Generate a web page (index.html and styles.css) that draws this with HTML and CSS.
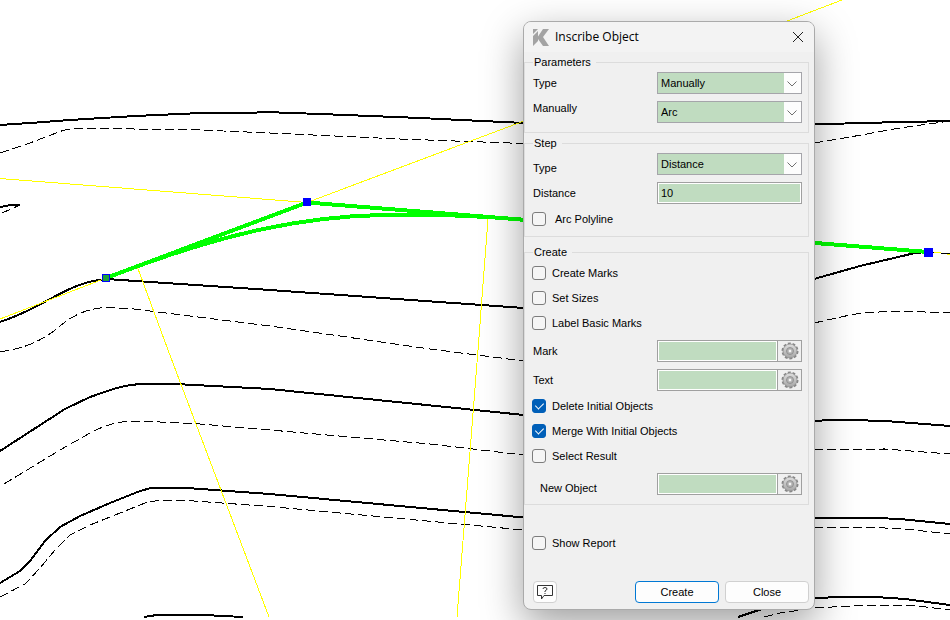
FILE: index.html
```html
<!DOCTYPE html>
<html lang="en">
<head>
<meta charset="utf-8">
<title>Inscribe Object</title>
<link rel="stylesheet" href="styles.css">
</head>
<body>
<main class="workspace">
  <svg class="drawing" viewBox="0 0 950 620" preserveAspectRatio="xMinYMin slice" aria-hidden="true">
    <g class="contour">
      <path d="M0 125L30 123L70 120L135 116L190 113.500L250 113L265 112L320 114L420 118L524 123L700 128L814 124.500L860 123L950 121"/>
      <path d="M0 207L8 205.500L20 205"/>
      <path d="M0 322C18 316 34 308 50 299C70 288 85 281 106 279L270 290L524 308"/>
      <path d="M814 279L860 266L915 253L928 252"/>
      <path d="M0 451L65 409L90 397L115 388.500Q130 384 145 384L175 384L270 389L524 415"/>
      <path d="M814 421L822 420.500L850 420L885 421L950 426"/>
      <path d="M0 583L20 571L30 561L45 541L60 527L80 516L110 503L140 491L153 487.500L180 487.500L270 494L524 517.500"/>
      <path d="M814 518.500L835 517.500L865 517.500L900 519L950 524"/>
      <path d="M144 617L160 614.500L195 614.500L243 617"/>
      <path d="M738 617L762 609L800 600L814 598.500L835 597L875 597L905 599L950 605"/>
    </g>
    <g class="contour-dashed">
      <path d="M0 153L30 143L60 131.500Q70 128 85 128L100 128.500L200 130L270 133L400 139L524 143.500"/>
      <path d="M814 143L850 137L900 128L950 121"/>
      <path d="M2 213L20 205"/>
      <path d="M0 352L10 350Q38 345 60 326Q80 309 105 307.500L130 308.500L270 326L430 349L524 361"/>
      <path d="M814 323L850 315Q870 311.500 900 311.500L950 312.500"/>
      <path d="M4 484L60 450L90 433Q112 421 135 421L160 422L200 424L270 430L430 444L524 455"/>
      <path d="M814 449.500L885 449L950 454"/>
      <path d="M0 597L25 584L40 568L55 550L70 535L90 525L120 513L145 503L160 500L180 500L270 506.500L524 530"/>
      <path d="M814 527.500L875 527.500L905 529L950 534"/>
      <path d="M764 617L780 613L814 608L850 606L870 605L910 605L950 610"/>
      <path d="M928 252L950 254"/>
    </g>
    <g class="guide">
      <path d="M0 178.500L307 202.500L524 121L787 21L842 0"/>
      <path d="M0 319L106 278"/>
      <path d="M137 266L168 350L269 617"/>
      <path d="M488 219L478 350L457 617"/>
      <path d="M934 252L941 253M947 254L950 255"/>
    </g>
    <g class="selection">
      <path d="M106 278L307 202.500L928 252"/>
      <path d="M138 266C226 234 300 217 380 215C420 214 455 215 488 217"/>
    </g>
    <g class="nodes">
      <rect class="node-start" x="102.500" y="274.500" width="7" height="7"/>
      <rect x="303" y="198" width="8" height="8"/>
      <rect x="924" y="248" width="9" height="9"/>
    </g>
  </svg>

  <form class="dialog" role="dialog" aria-labelledby="dialog-title">
    <header class="titlebar">
      <svg class="logo" viewBox="0 0 17 17" aria-hidden="true">
        <path d="M1 0h5L1 5zM1 7l5-5v5.500L11 0h6l-6 8 6 9h-6L6 10v2l-5 5z"/>
      </svg>
      <h1 id="dialog-title">Inscribe Object</h1>
      <button class="close" type="button" aria-label="Close window">
        <svg viewBox="0 0 12 12" aria-hidden="true"><path d="M1 1l10 10M11 1L1 11"/></svg>
      </button>
    </header>

    <fieldset class="group">
      <legend>Parameters</legend>
      <div class="fields">
        <div class="field">
          <label for="param-type">Type</label>
          <span class="combo">
            <select id="param-type"><option>Manually</option></select>
            <svg viewBox="0 0 10 6" aria-hidden="true"><path d="M.5 .5L5 5L9.500 .5"/></svg>
          </span>
        </div>
        <div class="field">
          <label class="high" for="param-mode">Manually</label>
          <span class="combo">
            <select id="param-mode"><option>Arc</option></select>
            <svg viewBox="0 0 10 6" aria-hidden="true"><path d="M.5 .5L5 5L9.500 .5"/></svg>
          </span>
        </div>
      </div>
    </fieldset>

    <fieldset class="group">
      <legend>Step</legend>
      <div class="fields">
        <div class="field">
          <label class="low" for="step-type">Type</label>
          <span class="combo">
            <select id="step-type"><option>Distance</option></select>
            <svg viewBox="0 0 10 6" aria-hidden="true"><path d="M.5 .5L5 5L9.500 .5"/></svg>
          </span>
        </div>
        <div class="field">
          <label for="step-distance">Distance</label>
          <input class="entry" id="step-distance" type="text" value="10">
        </div>
        <label class="check wide"><input type="checkbox">Arc Polyline</label>
      </div>
    </fieldset>

    <fieldset class="group group-create">
      <legend>Create</legend>
      <div class="checks">
        <label class="check"><input type="checkbox">Create Marks</label>
        <label class="check"><input type="checkbox">Set Sizes</label>
        <label class="check"><input type="checkbox">Label Basic Marks</label>
      </div>
      <div class="fields">
        <div class="field">
          <label for="mark">Mark</label>
          <span class="picker">
            <input class="entry" id="mark" type="text">
            <button type="button" aria-label="Mark settings"><svg class="gear" viewBox="0 0 18 18" aria-hidden="true"><use href="#gear"/></svg></button>
          </span>
        </div>
        <div class="field">
          <label for="text">Text</label>
          <span class="picker">
            <input class="entry" id="text" type="text">
            <button type="button" aria-label="Text settings"><svg class="gear" viewBox="0 0 18 18" aria-hidden="true"><use href="#gear"/></svg></button>
          </span>
        </div>
      </div>
      <div class="checks">
        <label class="check"><input type="checkbox" checked>Delete Initial Objects</label>
        <label class="check"><input type="checkbox" checked>Merge With Initial Objects</label>
        <label class="check"><input type="checkbox">Select Result</label>
      </div>
      <div class="field">
        <label class="low indent" for="new-object">New Object</label>
        <span class="picker">
          <input class="entry" id="new-object" type="text">
          <button type="button" aria-label="New object settings"><svg class="gear" viewBox="0 0 18 18" aria-hidden="true"><use href="#gear"/></svg></button>
        </span>
      </div>
    </fieldset>

    <label class="check report"><input type="checkbox">Show Report</label>

    <footer class="actions">
      <button class="help" type="button" aria-label="Help">
        <svg viewBox="0 0 18 16" aria-hidden="true">
          <path d="M1.500 1.500h15v10H8L5.500 15V11.500h-4z"/>
          <path d="M7 5Q7 3.500 9 3.500T11 5Q11 6 9 7V8M9 9v1"/>
        </svg>
      </button>
      <button class="push primary" type="submit">Create</button>
      <button class="push" type="button">Close</button>
    </footer>
  </form>

  <svg class="symbols" aria-hidden="true">
    <defs>
      <linearGradient id="metal" x1="0" y1="0" x2="0" y2="1">
        <stop offset="0" stop-color="#dedede"/>
        <stop offset="1" stop-color="#a6a6a6"/>
      </linearGradient>
      <symbol id="gear" viewBox="0 0 18 18">
        <circle cx="9" cy="9" r="7.300" fill="none" stroke="#858585" stroke-width="2.400" stroke-dasharray="2.800 1.787"/>
        <circle cx="9" cy="9" r="7" fill="url(#metal)" stroke="#909090" stroke-width=".8"/>
        <circle cx="9" cy="9" r="3.500" fill="#b4b4b4" stroke="#888" stroke-width=".8"/>
        <circle cx="9" cy="9" r="1.900" fill="#f3f3f3" stroke="#999" stroke-width=".6"/>
      </symbol>
    </defs>
  </svg>
</main>
</body>
</html>
```
FILE: styles.css
```css
* {
  box-sizing: border-box;
}

body {
  margin: 0;
  background: #fff;
  color: #000;
  font: 11px/14px "Liberation Sans", Arial, sans-serif;
}

button,
input,
select {
  margin: 0;
  color: inherit;
  font: inherit;
}

.workspace {
  position: relative;
  min-height: 100vh;
  overflow: hidden;
}

.symbols {
  position: absolute;
  width: 0;
  height: 0;
}

/* Drawing canvas */

.drawing {
  position: absolute;
  inset: 0;
  width: 100%;
  height: 100%;
  fill: none;
  shape-rendering: crispEdges;
}

.contour {
  stroke: #000;
  stroke-width: 2;
}

.contour-dashed {
  stroke: #000;
  stroke-width: 1;
  stroke-dasharray: 9 4;
}

.guide {
  stroke: #ff0;
  stroke-width: 1;
}

.selection {
  stroke: #0f0;
  stroke-width: 4;
}

.nodes {
  fill: #00f;
}

.node-start {
  fill: #1ea03c;
  stroke: #00f;
}

/* Dialog window */

.dialog {
  position: absolute;
  top: 21px;
  left: 523px;
  width: 292px;
  padding-bottom: 6px;
  border: 1px solid #aaa;
  border-radius: 8px;
  background: #f0f0f0;
  box-shadow: 0 14px 40px rgb(0 0 0 / 38%);
}

.titlebar {
  display: flex;
  align-items: center;
  height: 30px;
  margin-bottom: 3px;
  padding: 0 10px 0 8px;
  border-radius: 7px 7px 0 0;
  background: #f3f3f3;
}

.titlebar h1 {
  flex: 1;
  margin: 0;
  font: 12px/16px "Open Sans", sans-serif;
}

.logo {
  width: 17px;
  height: 17px;
  margin-right: 6px;
  fill: #a3a3a3;
}

.close {
  display: flex;
  padding: 0;
  border: 0;
  background: none;
}

.close svg {
  width: 12px;
  height: 12px;
  fill: none;
  stroke: #222;
}

.group {
  min-width: 0;
  margin: 0 5px 3px 0;
  padding: 3px 6px 9px 8px;
  border: 1px solid #dcdcdc;
}

.group legend {
  padding: 0 5px 0 1px;
}

.group-create {
  margin-top: 8px;
  padding-top: 6px;
}

.fields {
  display: grid;
  gap: 7px;
}

.checks {
  display: grid;
  gap: 9px;
}

.checks + .fields,
.checks + .field {
  margin-top: 9px;
}

.fields + .checks {
  margin-top: 7px;
}

.field {
  display: grid;
  grid-template-columns: 1fr 145px;
  align-items: center;
}

.high {
  align-self: start;
}

.low {
  align-self: end;
}

.indent {
  padding-left: 7px;
}

.combo {
  display: grid;
  position: relative;
}

.combo select {
  height: 22px;
  padding: 0 20px 0 3px;
  border: 1px solid #a5a5aa;
  border-radius: 0;
  background: linear-gradient(#fdfdfd, #fdfdfd) right / 17px 100% no-repeat #c0dcc0;
  appearance: none;
}

.combo svg {
  position: absolute;
  top: 9px;
  right: 5px;
  width: 10px;
  height: 6px;
  fill: none;
  stroke: #707070;
  pointer-events: none;
}

.entry {
  width: 100%;
  min-width: 0;
  height: 22px;
  padding: 0 3px;
  border: 1px solid #a0a0a0;
  border-radius: 0;
  background: #c0dcc0;
  box-shadow: inset 0 0 0 1px #fff;
}

.picker {
  display: grid;
  grid-template-columns: 1fr 25px;
}

.picker .entry {
  border-right: 0;
}

.picker button {
  display: grid;
  place-items: center;
  height: 22px;
  padding: 0;
  border: 1px solid #a0a0a0;
  background: #f0f0f0;
}

.gear {
  width: 18px;
  height: 18px;
}

.check {
  display: flex;
  align-items: center;
  gap: 6px;
  height: 16px;
  margin-left: -1px;
}

.check.wide {
  gap: 9px;
}

.check input {
  display: grid;
  place-items: center;
  width: 14px;
  height: 14px;
  border: 1px solid #7c7c7c;
  border-radius: 3px;
  background: #f5f5f5;
  appearance: none;
}

.check input:checked {
  border-color: #005fb8;
  background: #005fb8;
}

.check input:checked::before {
  width: 4px;
  height: 7px;
  margin-bottom: 3px;
  border: solid #fff;
  border-width: 0 1px 1px 0;
  content: "";
  transform: rotate(45deg);
}

.report {
  margin: 30px 8px;
}

.actions {
  display: flex;
  gap: 6px;
  padding: 0 5px 0 9px;
}

.actions button {
  height: 22px;
  padding: 0;
  border: 1px solid #d0d0d0;
  border-radius: 4px;
  background: #fdfdfd;
}

.actions .primary {
  border-color: #0078d4;
}

.push {
  width: 84px;
}

.help {
  display: grid;
  place-items: center;
  width: 24px;
  margin-right: auto;
}

.help svg {
  width: 18px;
  height: 16px;
  fill: none;
  stroke: #333;
}
```
